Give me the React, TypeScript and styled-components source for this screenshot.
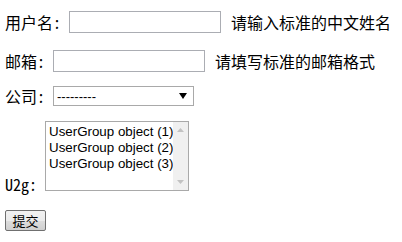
import styled, { createGlobalStyle } from "styled-components";

const GlobalStyle = createGlobalStyle`
  html, body {
    margin: 0;
    padding: 0;
    background: #ffffff;
  }
  body {
    font-family: "Noto Sans Mono CJK SC", "Noto Sans CJK SC", monospace;
    font-size: 16px;
    color: #000000;
  }
`;

const Form = styled.form`
  display: flex;
  flex-direction: column;
  align-items: flex-start;
  padding: 11px 0 0 5px;
`;

const Row = styled.div<{ $top: number; $bottom?: boolean }>`
  display: flex;
  align-items: ${(p) => (p.$bottom ? "flex-end" : "center")};
  margin-top: ${(p) => p.$top}px;
  gap: 8px;
`;

const Label = styled.label<{ $drop?: number }>`
  line-height: 18px;
  white-space: nowrap;
  margin-bottom: ${(p) => p.$drop ?? 0}px;
`;

const TextInput = styled.input`
  box-sizing: border-box;
  width: 152px;
  height: 22px;
  margin: 0;
  padding: 1px 2px;
  border: 1px solid #abadb3;
  font-family: "Liberation Sans", Arial, sans-serif;
  font-size: 13px;
  outline: none;
`;

const Hint = styled.span`
  margin-left: 2px;
  line-height: 18px;
  white-space: nowrap;
`;

const SelectWrap = styled.div`
  box-sizing: border-box;
  display: flex;
  align-items: center;
  width: 141px;
  height: 20px;
  border: 1px solid #a9a9a9;
  background: #ffffff;
`;

const Select = styled.select`
  flex: 1;
  appearance: none;
  border: none;
  background: transparent;
  margin: 0;
  padding: 0 0 0 3px;
  height: 18px;
  font-family: "Liberation Sans", Arial, sans-serif;
  font-size: 13px;
  color: #000000;
  outline: none;
`;

const Arrow = styled.svg`
  width: 8px;
  height: 6px;
  margin-right: 6px;
  flex-shrink: 0;
`;

const ListBox = styled.div`
  box-sizing: border-box;
  display: flex;
  width: 144px;
  height: 70px;
  border: 1px solid #a9a9a9;
  background: #ffffff;
`;

const Options = styled.div`
  flex: 1;
  padding: 2px 0 0 3px;
  font-family: "Liberation Sans", Arial, sans-serif;
  font-size: 13.33px;
  line-height: 16px;
  color: #000000;
`;

const Option = styled.div`
  white-space: nowrap;
`;

const ScrollTrack = styled.div`
  width: 17px;
  display: flex;
  flex-direction: column;
  justify-content: space-between;
  align-items: center;
  background: #f0f0f0;
  padding: 6px 0;
  box-sizing: border-box;
`;

const ScrollArrow = styled.svg`
  width: 7px;
  height: 4px;
`;

const Submit = styled.button`
  box-sizing: border-box;
  width: 41px;
  height: 21px;
  margin-top: 19px;
  padding: 0;
  border: 1px solid #707070;
  border-radius: 2px;
  background: linear-gradient(#f2f2f2 0%, #ebebeb 50%, #dddddd 51%, #cfcfcf 100%);
  font-family: "Noto Sans CJK SC", sans-serif;
  font-size: 13px;
  line-height: 19px;
  color: #000000;
`;

const groups = ["UserGroup object (1)", "UserGroup object (2)", "UserGroup object (3)"];

export default function App() {
  return (
    <>
      <GlobalStyle />
      <Form onSubmit={(e) => e.preventDefault()}>
        <Row $top={0}>
          <Label htmlFor="id_username">用户名:</Label>
          <TextInput id="id_username" type="text" />
          <Hint>请输入标准的中文姓名</Hint>
        </Row>
        <Row $top={17}>
          <Label htmlFor="id_email">邮箱:</Label>
          <TextInput id="id_email" type="text" />
          <Hint>请填写标准的邮箱格式</Hint>
        </Row>
        <Row $top={14}>
          <Label htmlFor="id_company">公司:</Label>
          <SelectWrap>
            <Select id="id_company" defaultValue="">
              <option value="">---------</option>
            </Select>
            <Arrow viewBox="0 0 8 6">
              <path d="M0 0 H8 L4 6 Z" fill="#000000" />
            </Arrow>
          </SelectWrap>
        </Row>
        <Row $top={15} $bottom>
          <Label $drop={-2}>U2g:</Label>
          <ListBox role="listbox">
            <Options>
              {groups.map((g) => (
                <Option key={g} role="option">
                  {g}
                </Option>
              ))}
            </Options>
            <ScrollTrack>
              <ScrollArrow viewBox="0 0 7 4">
                <path d="M0 4 L3.5 0 L7 4 Z" fill="#c2c2c2" />
              </ScrollArrow>
              <ScrollArrow viewBox="0 0 7 4">
                <path d="M0 0 L3.5 4 L7 0 Z" fill="#c2c2c2" />
              </ScrollArrow>
            </ScrollTrack>
          </ListBox>
        </Row>
        <Submit type="submit">提交</Submit>
      </Form>
    </>
  );
}
